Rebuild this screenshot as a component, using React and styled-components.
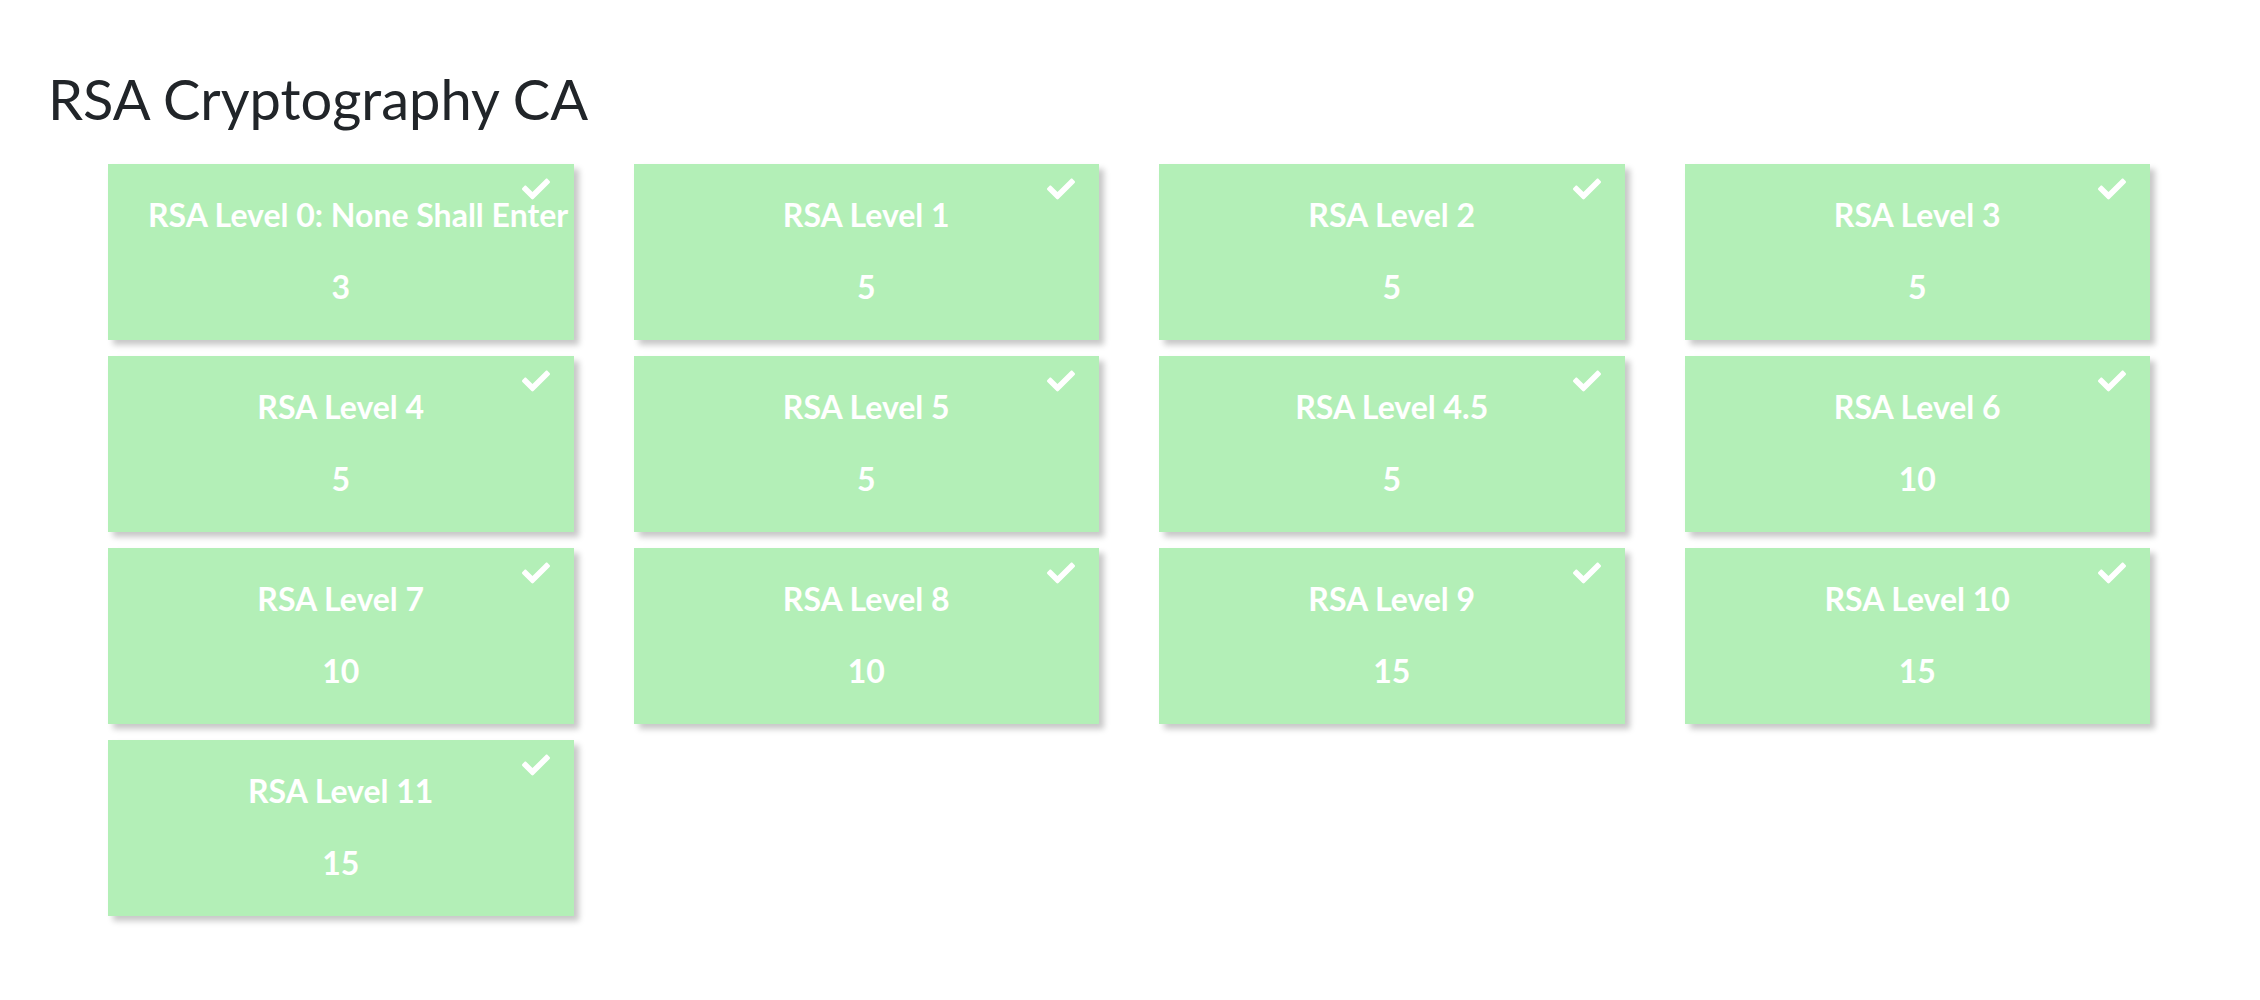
import styled, { createGlobalStyle } from 'styled-components';
import { FaCheck } from 'react-icons/fa';

const GlobalStyle = createGlobalStyle`
  html, body {
    margin: 0;
    padding: 0;
    background: #ffffff;
  }
  body {
    font-family: Lato, "Open Sans", sans-serif;
    color: #212529;
  }
`;

const Page = styled.main`
  padding: 65px 110px 60px 48px;
`;

const Heading = styled.h1`
  margin: 0 0 32px;
  font-size: 56px;
  font-weight: 400;
  line-height: 1.2;
  color: #212529;
`;

const Grid = styled.div`
  display: grid;
  grid-template-columns: repeat(4, minmax(0, 1fr));
  column-gap: 60px;
  row-gap: 16px;
  margin-left: 60px;
`;

const Card = styled.div`
  position: relative;
  height: 176px;
  box-sizing: border-box;
  padding: 33px 40px 0;
  background: ${(p) => (p.solved ? '#b3efb7' : '#e9ecef')};
  box-shadow: 5px 5px 6px rgba(0, 0, 0, 0.22);
  color: #ffffff;
  text-align: center;
  cursor: pointer;
`;

const CardTitle = styled.div`
  font-size: 32px;
  font-weight: 700;
  line-height: 36px;
  white-space: nowrap;
`;

const CardValue = styled.div`
  margin-top: 36px;
  font-size: 32px;
  font-weight: 700;
  line-height: 36px;
`;

const Solved = styled(FaCheck)`
  position: absolute;
  top: 11px;
  right: 24px;
  width: 28px;
  height: 28px;
  color: #ffffff;
`;

const challenges = [
  { name: 'RSA Level 0: None Shall Enter', value: 3 },
  { name: 'RSA Level 1', value: 5 },
  { name: 'RSA Level 2', value: 5 },
  { name: 'RSA Level 3', value: 5 },
  { name: 'RSA Level 4', value: 5 },
  { name: 'RSA Level 5', value: 5 },
  { name: 'RSA Level 4.5', value: 5 },
  { name: 'RSA Level 6', value: 10 },
  { name: 'RSA Level 7', value: 10 },
  { name: 'RSA Level 8', value: 10 },
  { name: 'RSA Level 9', value: 15 },
  { name: 'RSA Level 10', value: 15 },
  { name: 'RSA Level 11', value: 15 },
];

export default function App() {
  return (
    <>
      <GlobalStyle />
      <Page>
        <Heading>RSA Cryptography CA</Heading>
        <Grid>
          {challenges.map((c) => (
            <Card key={c.name} solved>
              <Solved />
              <CardTitle>{c.name}</CardTitle>
              <CardValue>{c.value}</CardValue>
            </Card>
          ))}
        </Grid>
      </Page>
    </>
  );
}
